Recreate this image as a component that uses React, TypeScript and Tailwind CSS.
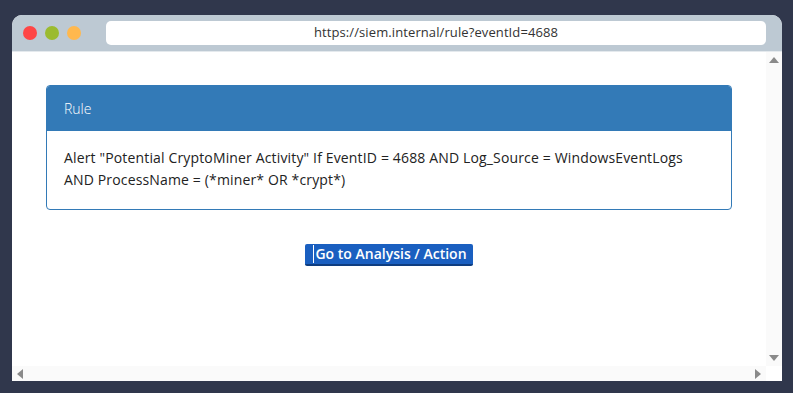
export default function App() {
  return (
    <div className="w-[793px] h-[393px] bg-[#30374c] pt-[15px] pl-[12px] font-['Open_Sans',sans-serif]">
      <div className="w-[770px] h-[366px] flex flex-col rounded-t-[10px] overflow-hidden bg-white">
        {/* Title bar */}
        <div className="h-[37px] flex items-center bg-[#bdc9d3] border-b border-[#e4e9ed] pl-[11px] pr-[16px] shrink-0">
          <div className="flex gap-[8px]">
            <span className="w-[14px] h-[14px] rounded-full bg-[#ff4646]" />
            <span className="w-[14px] h-[14px] rounded-full bg-[#9bbb2f]" />
            <span className="w-[14px] h-[14px] rounded-full bg-[#ffb84e]" />
          </div>
          <div className="ml-[25px] flex-1 h-[24px] rounded-[5px] bg-white flex items-center justify-center text-[13px] text-[#333] tracking-[0.1px]">
            https://siem.internal/rule?eventId=4688
          </div>
        </div>

        {/* Page + scrollbars */}
        <div className="flex-1 flex min-h-0">
          <div className="flex-1 bg-white pt-[33px] px-[34px]">
            <div className="border border-[#337ab7] rounded-[4px] overflow-hidden">
              <div className="h-[45px] bg-[#337ab7] text-white text-[14px] font-light flex items-center px-[17px]">
                Rule
              </div>
              <div className="px-[17px] pt-[16px] pb-[18px] text-[14px] leading-[22px] text-[#222] font-normal tracking-[0.15px]">
                Alert "Potential CryptoMiner Activity" If EventID = 4688 AND Log_Source = WindowsEventLogs AND ProcessName = (*miner* OR *crypt*)
              </div>
            </div>
            <div className="flex justify-center mt-[34px]">
              <button className="h-[22px] pl-[8px] pr-[6px] bg-[#1a5fc0] border-b-2 border-[#0e3d80] rounded-[2px] text-white text-[14px] font-semibold leading-none flex items-center">
                <span className="w-px h-[18px] bg-white mr-px" />
                Go to Analysis / Action
              </button>
            </div>
          </div>
          <div className="w-[16px] bg-[#fafafa] flex flex-col items-center justify-between py-[5px]">
            <span className="w-0 h-0 border-x-[5px] border-x-transparent border-b-[6px] border-b-[#8a8a8a]" />
            <span className="w-0 h-0 border-x-[5px] border-x-transparent border-t-[6px] border-t-[#8a8a8a]" />
          </div>
        </div>
        <div className="h-[15px] bg-[#fafafa] flex items-center justify-between px-[5px] shrink-0 mr-[16px]">
          <span className="w-0 h-0 border-y-[5px] border-y-transparent border-r-[6px] border-r-[#8a8a8a]" />
          <span className="w-0 h-0 border-y-[5px] border-y-transparent border-l-[6px] border-l-[#8a8a8a]" />
        </div>
      </div>
    </div>
  );
}
